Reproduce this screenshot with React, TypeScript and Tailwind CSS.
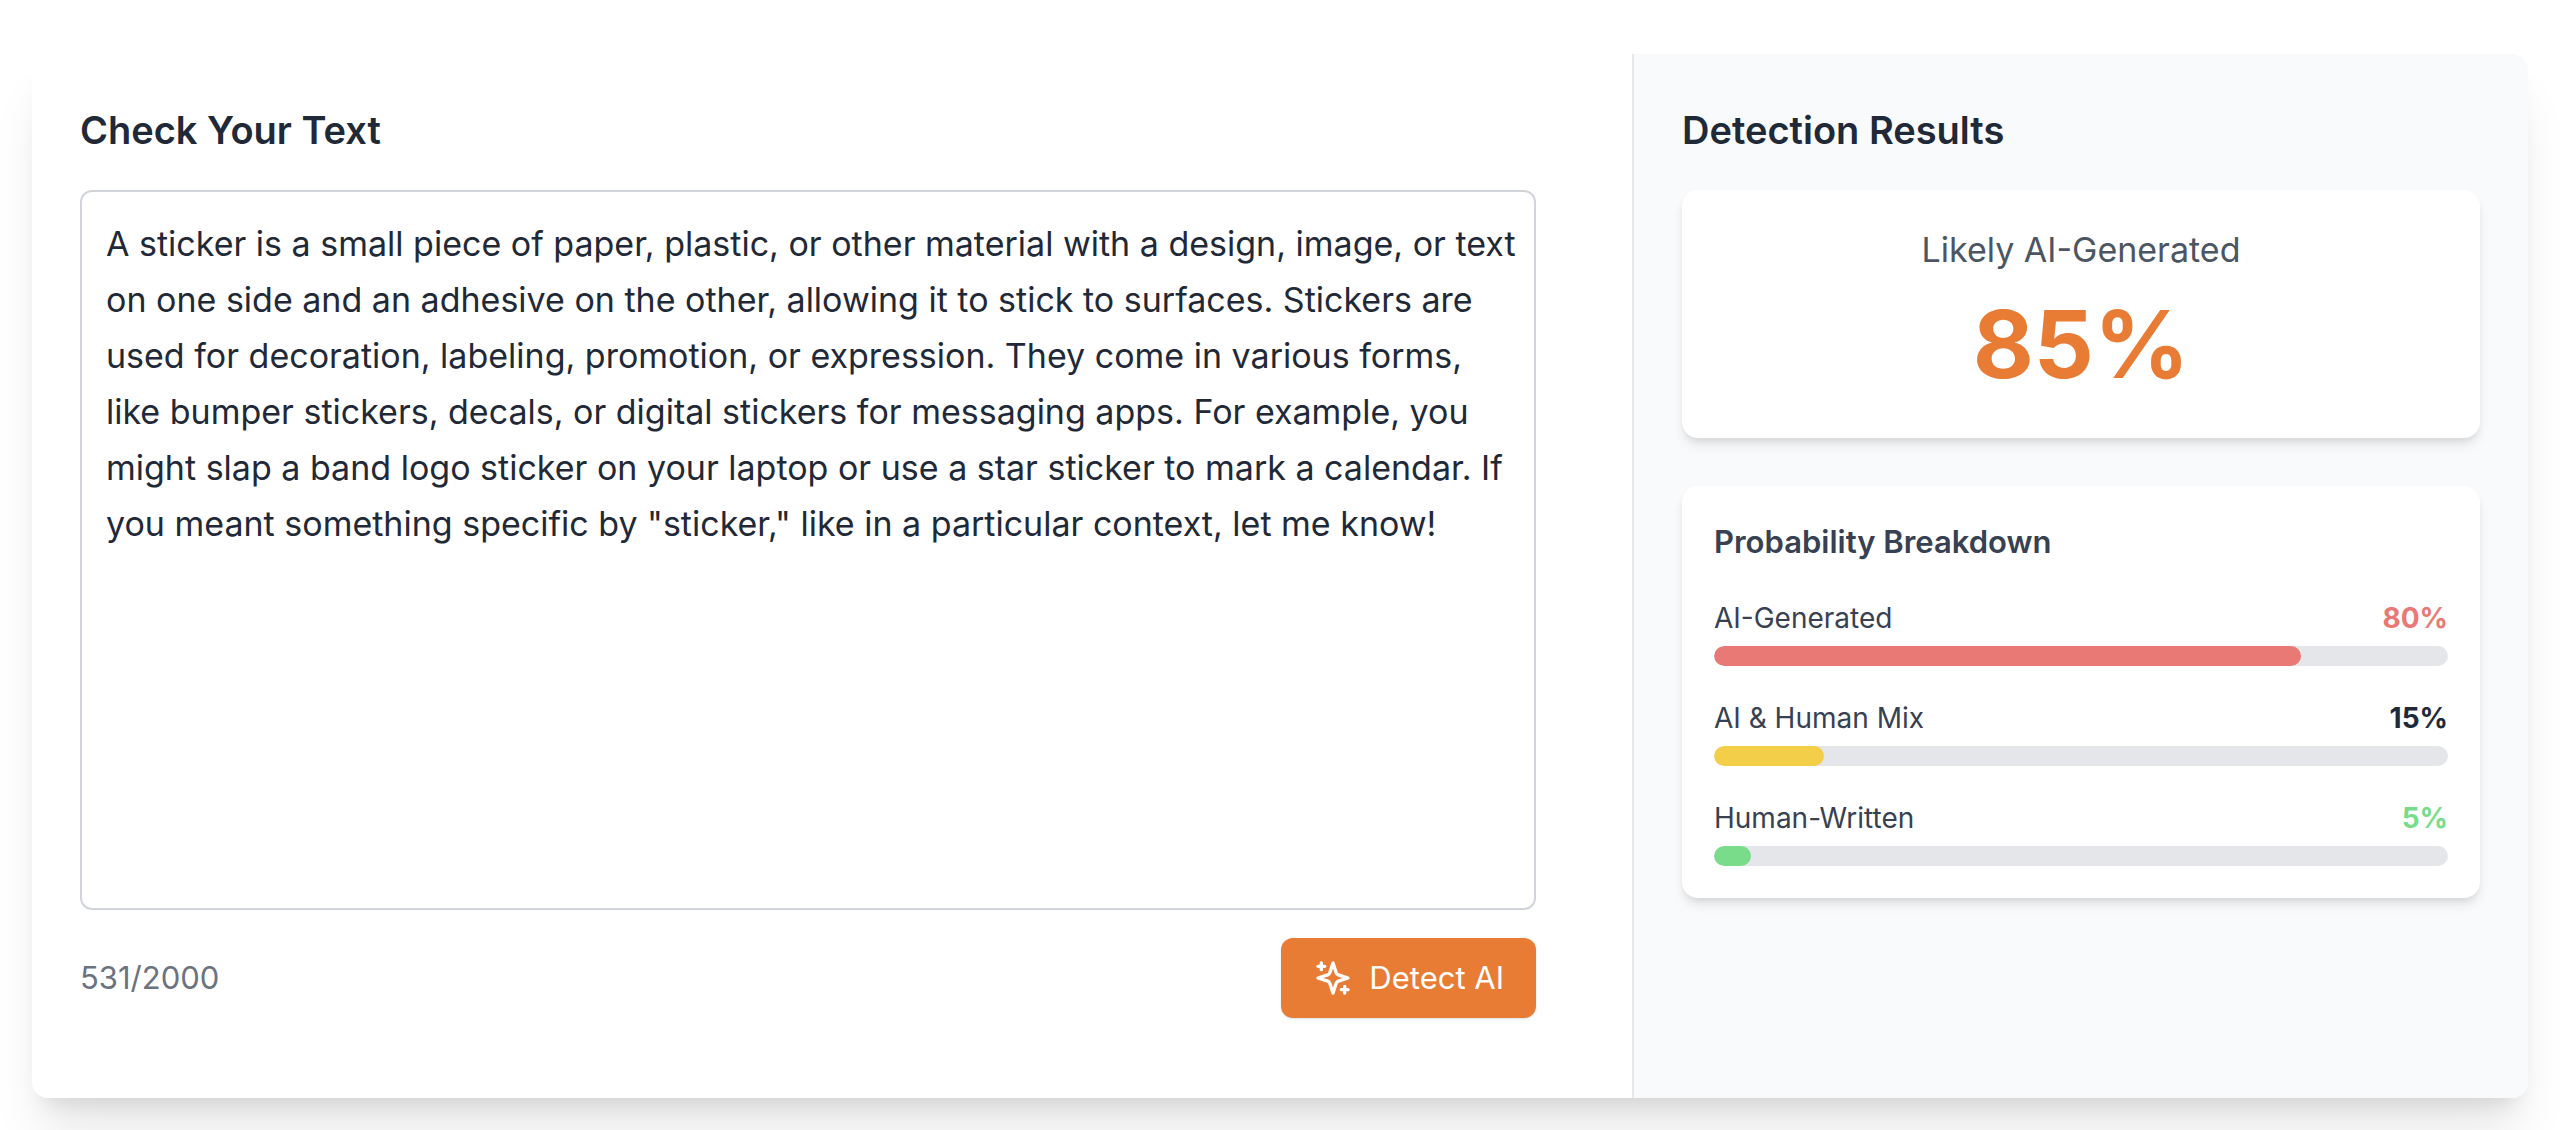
import { useState } from "react";

const SAMPLE =
  'A sticker is a small piece of paper, plastic, or other material with a design, image, or text on one side and an adhesive on the other, allowing it to stick to surfaces. Stickers are used for decoration, labeling, promotion, or expression. They come in various forms, like bumper stickers, decals, or digital stickers for messaging apps. For example, you might slap a band logo sticker on your laptop or use a star sticker to mark a calendar. If you meant something specific by "sticker," like in a particular context, let me know!';

const LIMIT = 2000;

const breakdown = [
  { label: "AI-Generated", value: 80, text: "text-[#e97975]", bar: "bg-[#e97975]" },
  { label: "AI & Human Mix", value: 15, text: "text-gray-800", bar: "bg-[#f2ce49]" },
  { label: "Human-Written", value: 5, text: "text-[#79dc8a]", bar: "bg-[#79dc8a]" },
];

function SparklesIcon() {
  return (
    <svg
      className="size-10"
      viewBox="0 0 24 24"
      fill="none"
      stroke="currentColor"
      strokeWidth="2"
      strokeLinecap="round"
      strokeLinejoin="round"
      aria-hidden="true"
    >
      <path d="m12 3-1.912 5.813a2 2 0 0 1-1.275 1.275L3 12l5.813 1.912a2 2 0 0 1 1.275 1.275L12 21l1.912-5.813a2 2 0 0 1 1.275-1.275L21 12l-5.813-1.912a2 2 0 0 1-1.275-1.275L12 3Z" />
      <path d="M5 3v4" />
      <path d="M19 17v4" />
      <path d="M3 5h4" />
      <path d="M17 19h4" />
    </svg>
  );
}

function Editor() {
  const [text, setText] = useState(SAMPLE);
  return (
    <section className="pt-12 pr-24 pb-20 pl-12">
      <h2 className="mb-8 text-[38px] leading-14 font-semibold text-[#1f2937]">
        <label htmlFor="source-text">Check Your Text</label>
      </h2>
      <textarea
        id="source-text"
        className="block h-[720px] w-full resize-none rounded-xl border-2 border-[#d1d5db] bg-white py-6 pr-3 pl-6 text-[34px] leading-14 text-[#1f2937] outline-none"
        maxLength={LIMIT}
        spellCheck={false}
        value={text}
        onChange={(e) => setText(e.target.value)}
      />
      <div className="mt-7 flex items-center justify-between">
        <span className="text-[31px] leading-12 text-[#6b7280]">
          {text.length}/{LIMIT}
        </span>
        <button
          type="button"
          className="flex h-20 items-center gap-4 rounded-xl bg-[#e97c35] px-8 text-[31px] leading-12 text-white shadow-sm"
        >
          <SparklesIcon />
          Detect AI
        </button>
      </div>
    </section>
  );
}

function Results() {
  return (
    <section className="border-l-2 border-[#e5e7eb] bg-[#f9fafc] p-12">
      <h2 className="mb-8 text-[38px] leading-14 font-semibold text-[#1f2937]">Detection Results</h2>
      <div className="mb-12 rounded-2xl bg-white p-8 text-center shadow-[0_8px_12px_-2px_rgb(0_0_0/0.1),0_4px_8px_-4px_rgb(0_0_0/0.1)]">
        <p className="text-[34px] leading-14 text-[#4b5563]">Likely AI-Generated</p>
        <p className="mt-1 text-[94px] leading-31 font-bold text-[#e97c35]">85%</p>
      </div>
      <div className="rounded-2xl bg-white p-8 shadow-[0_8px_12px_-2px_rgb(0_0_0/0.1),0_4px_8px_-4px_rgb(0_0_0/0.1)]">
        <h3 className="mb-8 text-[31px] leading-12 font-semibold text-[#374151]">Probability Breakdown</h3>
        <div className="flex flex-col gap-8">
          {breakdown.map((item) => (
            <div key={item.label} className="flex flex-col gap-2">
              <div className="flex justify-between text-[28px] leading-10">
                <span className="text-[#374151]">{item.label}</span>
                <span className={`font-bold ${item.text}`}>{item.value}%</span>
              </div>
              <div className="h-5 overflow-hidden rounded-full bg-[#e5e6ea]">
                <div className={`h-full rounded-full ${item.bar}`} style={{ width: `${item.value}%` }} />
              </div>
            </div>
          ))}
        </div>
      </div>
    </section>
  );
}

export default function App() {
  return (
    <div className="overflow-hidden bg-white px-8 pt-[54px] pb-8 font-['Inter',sans-serif]">
      <main className="grid grid-cols-[25fr_14fr] overflow-hidden rounded-2xl bg-white shadow-[0_40px_50px_-10px_rgb(0_0_0/0.1),0_16px_20px_-12px_rgb(0_0_0/0.1)]">
        <Editor />
        <Results />
      </main>
    </div>
  );
}
